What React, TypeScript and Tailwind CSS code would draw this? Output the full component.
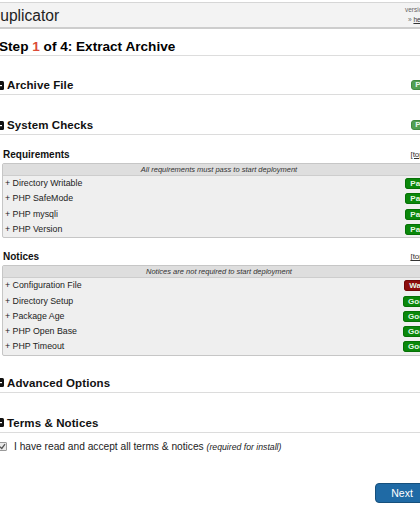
import React from "react";

const requirements = [
  { name: "Directory Writable", status: "Pass" },
  { name: "PHP SafeMode", status: "Pass" },
  { name: "PHP mysqli", status: "Pass" },
  { name: "PHP Version", status: "Pass" },
];

const notices = [
  { name: "Configuration File", status: "Warn" },
  { name: "Directory Setup", status: "Good" },
  { name: "Package Age", status: "Good" },
  { name: "PHP Open Base", status: "Good" },
  { name: "PHP Timeout", status: "Good" },
];

function MinusBox() {
  return (
    <svg width="9" height="9" viewBox="0 0 9 9" className="-ml-[4px] mr-[3px] shrink-0">
      <rect x="0" y="0" width="9" height="9" rx="1.5" fill="#111" />
      <rect x="2" y="4" width="5" height="1.2" fill="#fff" />
    </svg>
  );
}

function SectionHead({ title, badge }: any) {
  return (
    <div className="flex items-center h-[14px] box-content pb-[2px] border-b border-[#dcdcdc]">
      <MinusBox />
      <span className="font-bold text-[11.5px] leading-[14px] text-[#111] tracking-[0.1px]">
        {title}
      </span>
      {badge && (
        <span className="ml-auto rounded-[3px] border border-[#3f8a3f] bg-[#52a052] px-[3px] text-[8px] leading-[8px] font-bold text-[#e8f5e8]">
          Pass
        </span>
      )}
    </div>
  );
}

function Badge({ status }: any) {
  const cls =
    status === "Warn"
      ? "bg-[#8d0d0d] border-[#6e0808]"
      : "bg-[#0a880a] border-[#067006]";
  return (
    <span
      className={
        "rounded-[3px] border px-[4px] text-[8px] leading-[9px] font-bold text-[#e6f7e6] " +
        cls
      }
    >
      {status}
    </span>
  );
}

function CheckTable({ label, note, rows }: any) {
  return (
    <div>
      <div className="flex items-center h-[12px] pl-[4px]">
        <span className="font-bold text-[10px] leading-[12px] text-[#111]">{label}</span>
        <a className="ml-auto mr-[12px] text-[8px] leading-[10px] text-[#333] underline">[top]</a>
      </div>
      <div className="mt-[1.5px] ml-[3px] mr-[2px] border border-[#c6c6c6] rounded-[2px] bg-[#efefef]">
        <div className="h-[12.5px] bg-[#dedede] border-b border-[#cdcdcd] flex items-center justify-center italic text-[7.5px] text-[#333]">
          {note}
        </div>
        {rows.map((r: any) => (
          <div key={r.name} className="h-[15.3px] flex items-center pl-[2px] pr-[1px] text-[8.8px] text-[#222]">
            <span>+ {r.name}</span>
            <span className="ml-auto">
              <Badge status={r.status} />
            </span>
          </div>
        ))}
      </div>
    </div>
  );
}

export default function App() {
  return (
    <div
      className="w-[420px] h-[518px] overflow-hidden bg-white"
      style={{ fontFamily: '"Liberation Sans", Arial, sans-serif' }}
    >
      <div className="-ml-[14px] w-[470px] pt-[2px]">
        <div className="h-[27px] border-t border-[#d6d6d6] border-b-2 border-b-[#cdcdcd] bg-[#f3f3f3] flex">
          <div className="pl-[3px] text-[15.6px] leading-[26px] text-[#222]">Duplicator</div>
          <div className="ml-auto w-[51px] pt-[2px] text-[6.5px] leading-[10px] text-[#666]">
            <div>version: 1.2.4</div>
            <div className="pl-[3px]">
              » <a className="underline text-[#333]">help</a>
            </div>
          </div>
        </div>

        <div className="w-[452px] pl-[13px]">
          <div className="pt-[10px] border-b border-[#dddddd]">
            <div className="font-bold text-[13.6px] leading-[16px] text-[#000]">
              Step <span className="text-[#db4b39]">1</span> of 4: Extract Archive
            </div>
          </div>

          <div className="mt-[22px]">
            <SectionHead title="Archive File" badge />
          </div>

          <div className="mt-[23px]">
            <SectionHead title="System Checks" badge />
          </div>

          <div className="mt-[14px]">
            <CheckTable
              label="Requirements"
              note="All requirements must pass to start deployment"
              rows={requirements}
            />
          </div>

          <div className="mt-[13px]">
            <CheckTable
              label="Notices"
              note="Notices are not required to start deployment"
              rows={notices}
            />
          </div>

          <div className="mt-[20px]">
            <SectionHead title="Advanced Options" />
          </div>

          <div className="mt-[23px]">
            <SectionHead title="Terms & Notices" />
          </div>

          <div className="mt-[8px] flex items-center h-[12px]">
            <span className="-ml-[1px] w-[9px] h-[9px] border border-[#9a9a9a] rounded-[1px] bg-[#e9e9e9] flex items-center justify-center">
              <svg width="7" height="7" viewBox="0 0 7 7">
                <path d="M1 3.8 L2.8 5.5 L6 1.2" stroke="#555" strokeWidth="1.3" fill="none" />
              </svg>
            </span>
            <span className="ml-[7px] text-[10.2px] leading-[12px] text-[#222]">
              I have read and accept all terms &amp; notices{" "}
              <i className="text-[8.7px]">(required for install)</i>
            </span>
          </div>

          <div className="mt-[30px] flex justify-end pr-[9px]">
            <button className="w-[54px] h-[20px] rounded-[4px] border border-[#16507c] bg-[#1f6aa5] text-white text-[10.5px] leading-[18px]">
              Next
            </button>
          </div>
        </div>
      </div>
    </div>
  );
}
